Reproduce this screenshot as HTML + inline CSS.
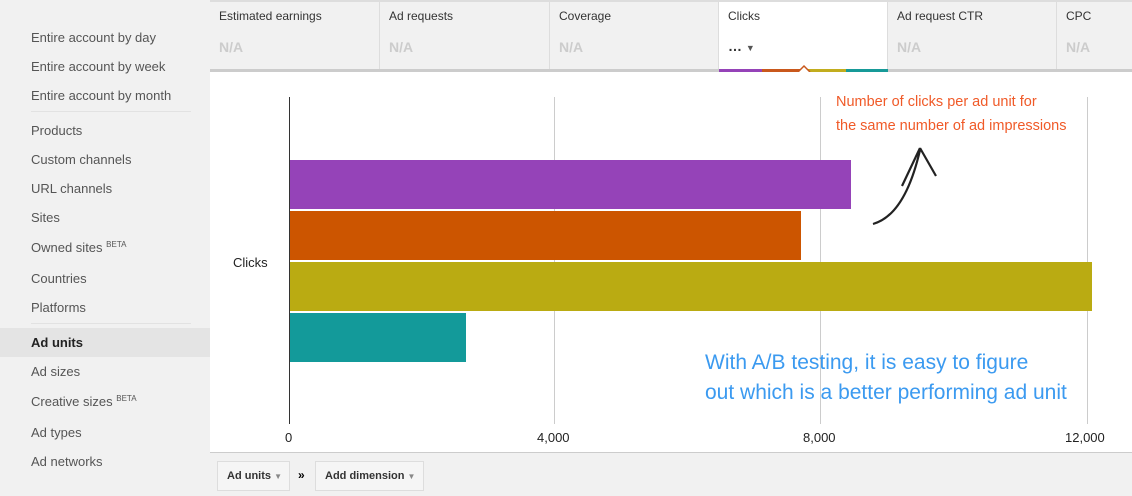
<!DOCTYPE html>
<html><head><style>
*{margin:0;padding:0;box-sizing:border-box}
body{width:1132px;height:496px;overflow:hidden;background:#fff;font-family:"Liberation Sans",Arial,sans-serif;position:relative}
.side{position:absolute;left:0;top:0;width:210px;height:496px;background:#f1f1f1}
.side div{position:absolute;left:31px;font-size:13px;color:#555}
.side sup{font-size:8px;vertical-align:5px}
.sep{position:absolute;left:31px;width:160px;height:1px;background:#e2e2e2}
.hdr{position:absolute;left:210px;top:0;width:922px;height:72px;background:#f1f1f1;border-top:2px solid #ddd;border-bottom:3px solid #ccc}
.t{position:absolute;top:0;height:67px;border-right:1px solid #ddd}
.t .l{position:absolute;left:9px;top:7px;font-size:12px;color:#333}
.t .v{position:absolute;left:9px;top:37px;font-size:14px;font-weight:bold;color:#ccc}
.a{position:absolute;font-family:"Liberation Sans Narrow","Liberation Sans",sans-serif;font-size:15px;line-height:24px}
.bot{position:absolute;left:210px;top:452px;width:922px;height:44px;background:#f1f1f1;border-top:1px solid #ccc}
.btn{position:absolute;top:8px;height:30px;border:1px solid #ddd;background:#f5f5f5;font-size:11px;font-weight:bold;color:#333;line-height:28px;padding-left:9px}
.ax{position:absolute;top:430px;font-size:13px;color:#222}
</style></head><body>
<div class="side">
<div style="top:30px">Entire account by day</div>
<div style="top:59px">Entire account by week</div>
<div style="top:88px">Entire account by month</div>
<span class="sep" style="top:111px"></span>
<div style="top:123px">Products</div>
<div style="top:152px">Custom channels</div>
<div style="top:181px">URL channels</div>
<div style="top:210px">Sites</div>
<div style="top:240px">Owned sites <sup>BETA</sup></div>
<div style="top:271px">Countries</div>
<div style="top:300px">Platforms</div>
<span class="sep" style="top:323px"></span>
<span style="position:absolute;left:0;top:328px;width:210px;height:29px;background:#e4e4e4"></span>
<div style="top:335px;color:#222;font-weight:bold">Ad units</div>
<div style="top:364px">Ad sizes</div>
<div style="top:394px">Creative sizes <sup>BETA</sup></div>
<div style="top:425px">Ad types</div>
<div style="top:454px">Ad networks</div>
</div>
<div class="hdr">
<div class="t" style="left:0;width:170px"><span class="l">Estimated earnings</span><span class="v">N/A</span></div>
<div class="t" style="left:170px;width:170px"><span class="l">Ad requests</span><span class="v">N/A</span></div>
<div class="t" style="left:340px;width:169px"><span class="l">Coverage</span><span class="v">N/A</span></div>
<div class="t" style="left:509px;width:169px;background:#fff;height:70px"><span class="l">Clicks</span><span class="v" style="color:#333;top:36px">… <span style="font-size:9px;color:#555">▼</span></span>
<span style="position:absolute;left:0;bottom:0;width:43px;height:3px;background:#9543b8"></span>
<span style="position:absolute;left:43px;bottom:0;width:42px;height:3px;background:#c9581c"></span>
<span style="position:absolute;left:85px;bottom:0;width:42px;height:3px;background:#c2ad1e"></span>
<span style="position:absolute;left:127px;bottom:0;width:42px;height:3px;background:#179a98"></span>
<svg style="position:absolute;left:78px;bottom:0" width="14" height="8"><path d="M1 8 L7 2 L13 8" stroke="#c9581c" stroke-width="1.5" fill="#fff"/></svg>
</div>
<div class="t" style="left:678px;width:169px"><span class="l">Ad request CTR</span><span class="v">N/A</span></div>
<div class="t" style="left:847px;width:75px;border:none"><span class="l">CPC</span><span class="v">N/A</span></div>
</div>
<span style="position:absolute;left:554px;top:97px;width:1px;height:327px;background:#ccc"></span>
<span style="position:absolute;left:820px;top:97px;width:1px;height:327px;background:#ccc"></span>
<span style="position:absolute;left:1087px;top:97px;width:1px;height:327px;background:#ccc"></span>
<span style="position:absolute;left:289px;top:97px;width:1px;height:327px;background:#333"></span>
<span style="position:absolute;left:290px;top:160px;width:561px;height:49px;background:#9543b8"></span>
<span style="position:absolute;left:290px;top:211px;width:511px;height:49px;background:#cc5500"></span>
<span style="position:absolute;left:290px;top:262px;width:802px;height:49px;background:#baab12"></span>
<span style="position:absolute;left:290px;top:313px;width:176px;height:49px;background:#139a9a"></span>
<div style="position:absolute;left:233px;top:255px;font-size:13px;color:#222">Clicks</div>
<div class="ax" style="left:285px">0</div>
<div class="ax" style="left:537px">4,000</div>
<div class="ax" style="left:803px">8,000</div>
<div class="ax" style="left:1065px">12,000</div>
<div class="a" style="left:836px;top:90px;color:#f05a28;font-size:14.5px">Number of clicks per ad unit for<br>the same number of ad impressions</div>
<svg style="position:absolute;left:860px;top:140px" width="90" height="90"><path d="M13 84 Q45 75 60 10 M60 8 L42 46 M60 8 L76 36" stroke="#222" stroke-width="2.2" fill="none"/></svg>
<div class="a" style="left:705px;top:348px;color:#3b9af0;font-size:21px;line-height:30px">With A/B testing, it is easy to figure<br>out which is a better performing ad unit</div>
<div class="bot">
<div class="btn" style="left:7px;width:73px">Ad units <span style="color:#888;font-size:8px">▼</span></div>
<div style="position:absolute;left:88px;top:15px;font-size:12px;font-weight:bold">»</div>
<div class="btn" style="left:105px;width:109px">Add dimension <span style="color:#888;font-size:8px">▼</span></div>
</div>
</body></html>
